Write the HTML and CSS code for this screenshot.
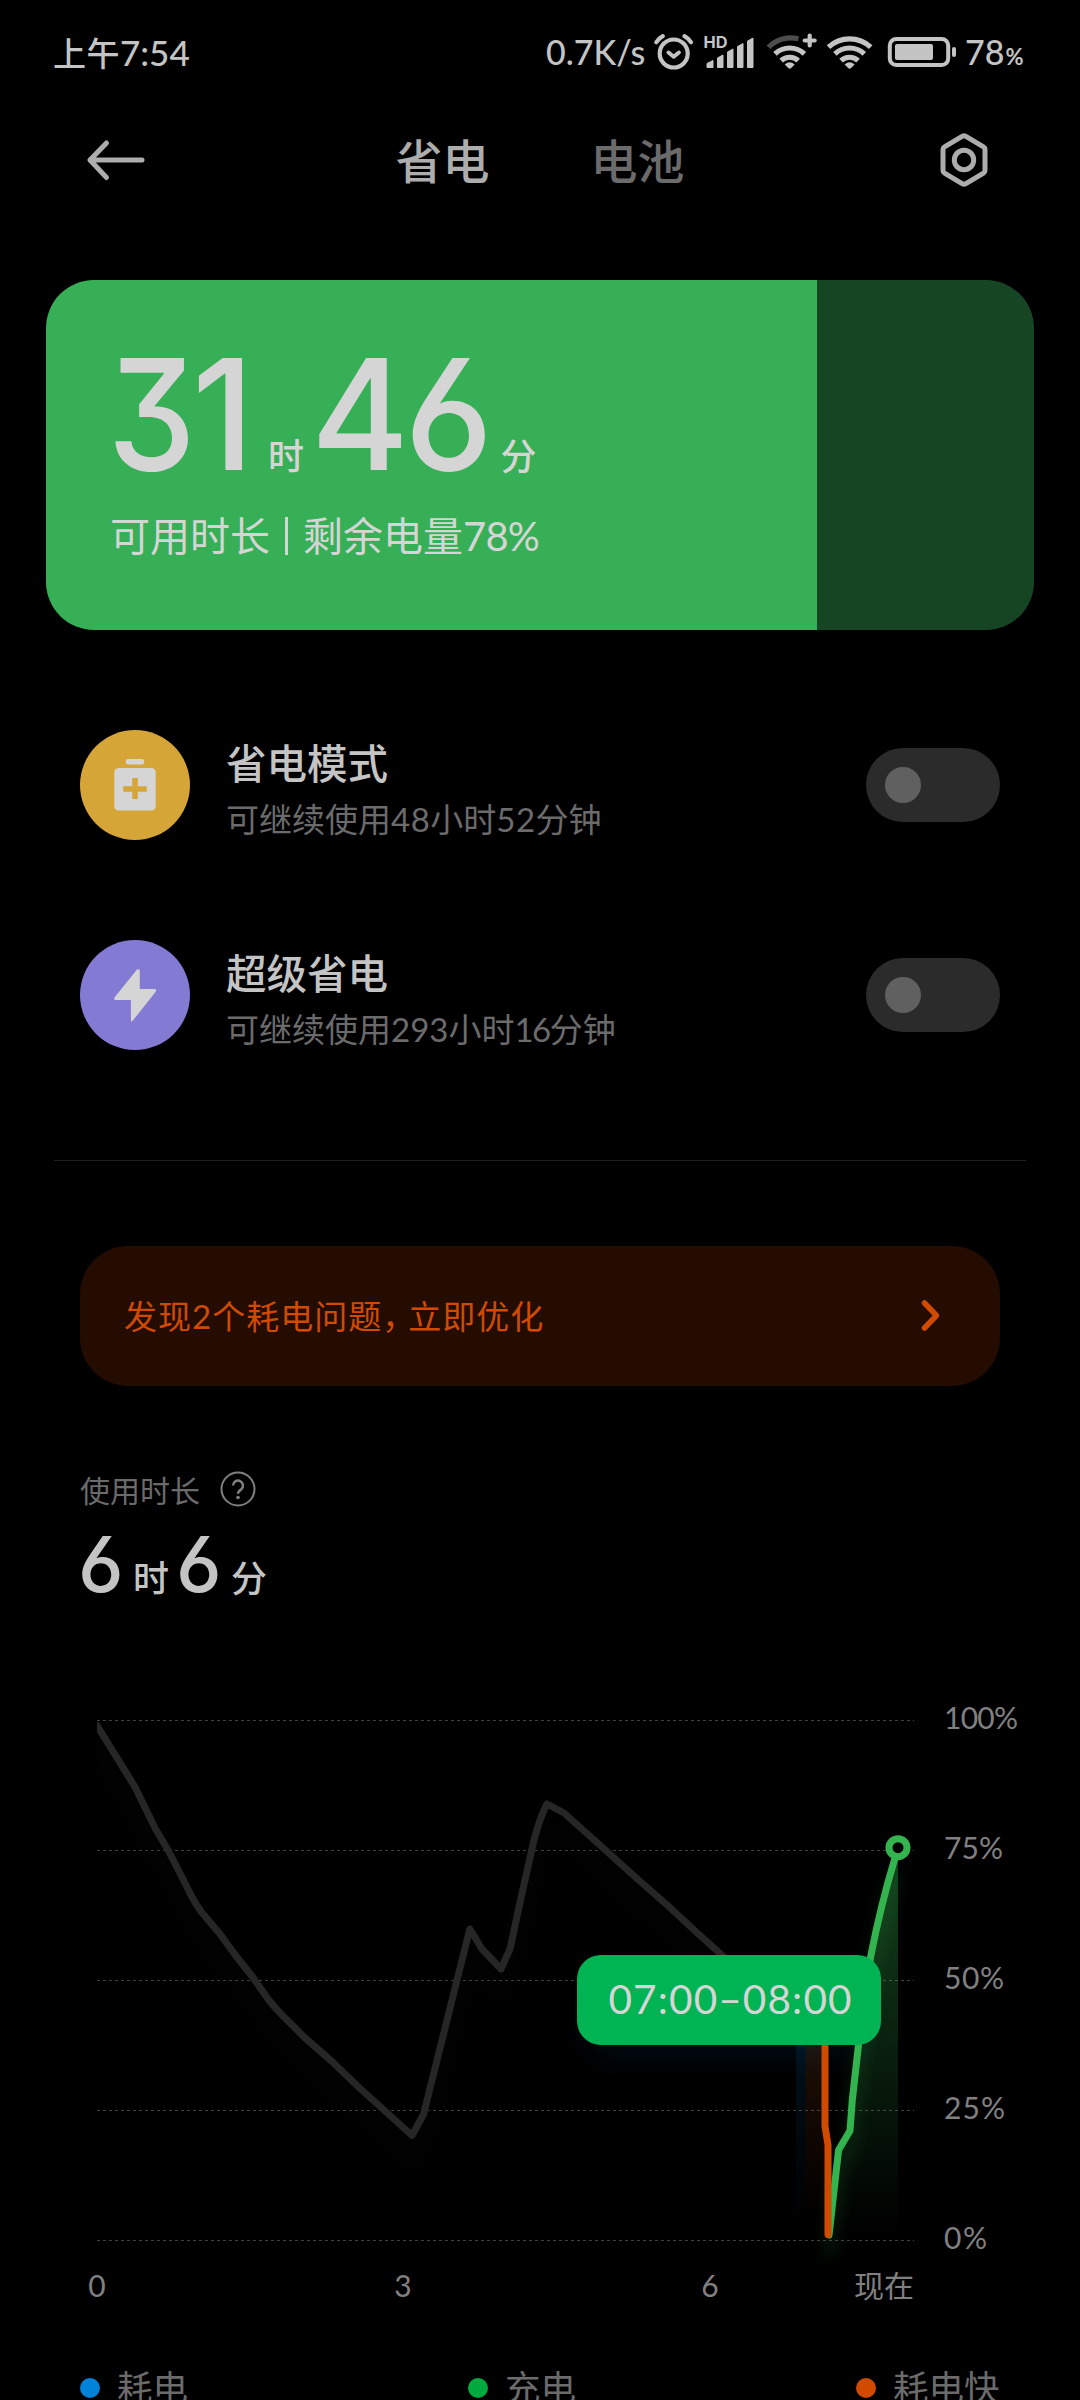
FILE: index.html
```html
<!DOCTYPE html>
<html lang="zh-CN">
<head>
<meta charset="utf-8">
<title>省电</title>
<link rel="stylesheet" href="styles.css">
</head>
<body>
<div class="screen">
  <div class="status">
    <span class="clock">上午<span>7:54</span></span>
    <div class="indicators">
      <span class="speed">0.7K/s</span>
      <svg class="status-icons" width="310" height="40" viewBox="650 32 310 40" fill="none">
        <g stroke="#c4c4c4" stroke-linecap="round" stroke-linejoin="round">
          <circle cx="673.7" cy="53.500" r="14" stroke-width="4.200"/>
          <path d="M668.5 52.500l5.200 4.200 5.200-4.200" stroke-width="4"/>
          <path d="M656.300 42.300Q658.500 38.500 662.800 36.200M691 42.300Q688.800 38.500 684.500 36.200" stroke-width="4.200"/>
        </g>
        <text class="hd" x="703.500" y="48" textLength="24" lengthAdjust="spacingAndGlyphs">HD</text>
        <path fill="#c4c4c4" stroke="#c4c4c4" stroke-width="1" stroke-linejoin="round" d="M707 63.500l6-3v7h-6zM717.500 58l5.500-3v12.500h-5.500zM727.500 52l5.500-3v18.500h-5.500zM737.500 46.500l5.500-3v24h-5.500zM747.500 41l5.500-3v29.500h-5.500z"/>
        <g stroke="#c4c4c4" stroke-width="5.200">
          <path d="M775 53.800a21.500 21.500 0 0 1 29.400 0M781.200 60.600a12.500 12.500 0 0 1 17 0"/>
          <path stroke="#4d4d4d" d="M768.500 47.200a31 31 0 0 1 30-8.400"/>
          <path d="M809.700 35.500v10M804.700 40.500h10" stroke-linecap="round" stroke-width="4.200"/>
          <path d="M828.500 47.200a31 31 0 0 1 42.200 0M834.900 53.800a21.500 21.500 0 0 1 29.400 0M841.100 60.600a12.500 12.500 0 0 1 17 0"/>
        </g>
        <path fill="#c4c4c4" d="M784.700 64.500q5-4.500 10 0l-3.500 3.600q-1.500 1.500-3 0zM844.600 64.500q5-4.500 10 0l-3.500 3.600q-1.500 1.500-3 0z"/>
        <rect x="889.800" y="39" width="58.400" height="26" rx="6.500" stroke="#c4c4c4" stroke-width="4"/>
        <rect x="895" y="44" width="38" height="16" rx="2" fill="#c4c4c4"/>
        <rect x="952" y="47" width="4" height="10" rx="2" fill="#c4c4c4"/>
      </svg>
      <span class="pct">78<small>%</small></span>
    </div>
  </div>

  <header class="topbar">
    <svg class="back" width="60" height="44" viewBox="0 0 60 44"><path d="M56 22H4M20.500 5L4 22l16.500 17.500" fill="none" stroke="#adadad" stroke-width="5" stroke-linecap="round" stroke-linejoin="round"/></svg>
    <nav class="tabs"><span class="tab active">省电</span><span class="tab">电池</span></nav>
    <svg class="gear" width="54" height="58" viewBox="0 0 54 58" fill="none" stroke="#adadad" stroke-width="5" stroke-linejoin="round"><path d="M25.500 5.200q1.500-.8 3 0l18 10.600q1.500.9 1.500 2.600v21.200q0 1.700-1.500 2.600l-18 10.600q-1.500.8-3 0l-18-10.600Q6 41.300 6 39.600V18.400q0-1.700 1.500-2.600z"/><circle cx="27" cy="29" r="9.700"/></svg>
  </header>

  <section class="battery-card">
    <svg class="time" width="480" height="160" viewBox="0 0 480 160">
      <text class="digit" transform="translate(-2.500 120) scale(.91 1)">3</text>
      <text class="digit" transform="translate(82 120) scale(.97 1)">1</text>
      <text class="unit" x="158" y="119.500">时</text>
      <text class="digit" transform="translate(201 120) scale(.97 1)">4</text>
      <text class="digit" transform="translate(294.500 120) scale(.97 1)">6</text>
      <text class="unit" x="390.500" y="119.500">分</text>
    </svg>
    <div class="remain">可用时长<span class="bar"></span>剩余电量<span class="num">78%</span></div>
  </section>

  <section class="modes">
    <div class="mode">
      <svg class="mode-icon" width="110" height="110" viewBox="0 0 110 110"><circle cx="55" cy="55" r="55" fill="#d5a538"/><g fill="#d5d5d5"><rect x="45.800" y="29" width="18.400" height="5.500" rx="2"/><rect x="34.300" y="38" width="41.400" height="42.500" rx="4.500"/></g><path d="M55 48v21M43.200 59h23.600" stroke="#d5a538" stroke-width="5.500"/></svg>
      <div class="mode-text"><h2>省电模式</h2><p>可继续使用<span class="wide">48</span>小时<span class="wide">52</span>分钟</p></div>
      <div class="switch"><span></span></div>
    </div>
    <div class="mode">
      <svg class="mode-icon" width="110" height="110" viewBox="0 0 110 110"><circle cx="55" cy="55" r="55" fill="#837ad4"/><path d="M57.500 30.200L35.200 58v1h16.600v21.500L75 51.200V50H58.900V30.500z" fill="#d5d5d5" stroke="#d5d5d5" stroke-width="1.800" stroke-linejoin="round"/></svg>
      <div class="mode-text"><h2>超级省电</h2><p>可继续使用<span>293</span>小时<span class="tight">16</span>分钟</p></div>
      <div class="switch"><span></span></div>
    </div>
  </section>
  <hr class="divider">

  <section class="issue">
    <span>发现<span class="num">2</span>个耗电问题<span class="comma">，</span>立即优化</span>
    <svg width="24" height="34" viewBox="0 0 24 34"><path d="M5.500 5l12 12.500-12 12.500" fill="none" stroke="#d04a00" stroke-width="5.500" stroke-linecap="round" stroke-linejoin="round"/></svg>
  </section>

  <section class="usage">
    <div class="usage-label"><span>使用时长</span><svg width="36" height="36" viewBox="0 0 36 36"><circle cx="18" cy="18" r="16.500" fill="none" stroke="#808080" stroke-width="2"/><path d="M13 14.500a5 5 0 1 1 8.200 3.900Q18 20.600 18 22.800" fill="none" stroke="#808080" stroke-width="2.500"/><circle cx="18" cy="26.500" r="1.800" fill="#808080"/></svg></div>
    <div class="usage-time"><b>6</b><i>时</i><b>6</b><i>分</i></div>
  </section>

  <svg class="chart" width="1080" height="640" viewBox="0 1680 1080 640">
    <defs>
      <linearGradient id="green" x1="0" y1="1848" x2="0" y2="2235" gradientUnits="userSpaceOnUse"><stop offset="0" stop-color="#34b44f" stop-opacity=".36"/><stop offset="1" stop-color="#34b44f" stop-opacity="0"/></linearGradient>
      <linearGradient id="blue" x1="0" y1="1980" x2="0" y2="2220" gradientUnits="userSpaceOnUse"><stop offset="0" stop-color="#0082d8" stop-opacity=".17"/><stop offset="1" stop-color="#0082d8" stop-opacity="0"/></linearGradient>
      <linearGradient id="orange" x1="0" y1="1980" x2="0" y2="2220" gradientUnits="userSpaceOnUse"><stop offset="0" stop-color="#b06030" stop-opacity=".22"/><stop offset="1" stop-color="#d04a00" stop-opacity="0"/></linearGradient>
      <filter id="glow" x="-20%" y="-20%" width="140%" height="140%"><feGaussianBlur stdDeviation="8"/></filter>
      <filter id="tipglow" x="-30%" y="-60%" width="160%" height="240%"><feGaussianBlur stdDeviation="16"/></filter>
      <clipPath id="plot"><path d="M97 1680H960V2320H97z"/></clipPath>
      <path id="history" d="M97 1725.500L109 1745 135 1787 155.500 1829 168 1850 188.500 1890Q193 1900 201 1911.500L220 1934 236 1956 253 1977.500 268 1999Q275 2008 282 2015L304.500 2037.500 332 2061.500 360 2088.500 384 2110 412 2135.500 423.500 2114.500 469.800 1929 482 1949 501 1969 510 1949 521.400 1896 530 1858Q537 1823 547 1804L564 1813 602 1847 633 1875 650 1890 669 1906.700 698.400 1934 724 1957"/>
      <path id="charging" d="M895 1858Q881 1904 870.600 1957L858.500 2045 852.300 2100 850 2130.700 838.600 2150 836 2173 829 2235"/>
    </defs>
    <path class="grid" d="M97 1720.500H914M97 1850.500H914M97 1980.500H914M97 2110.500H914M97 2240.500H914"/>
    <g clip-path="url(#plot)">
      <use href="#history" class="line" stroke="#262626" opacity=".17" filter="url(#glow)" y="24"/>
      <use href="#history" class="line" stroke="#262626"/>
    </g>
    <path d="M898 1848V2235H829L836 2173 838.600 2150 850 2130.700 852.300 2100 858.500 2045 870.600 1957Q881 1904 895 1858z" fill="url(#green)"/>
    <path d="M796 1980h9.500v240H796z" fill="url(#blue)"/>
    <path d="M805.500 1980H825v240h-19.500z" fill="url(#orange)"/>
    <rect x="590" y="1990" width="270" height="65" rx="24" fill="#0082d8" opacity=".1" filter="url(#tipglow)"/>
    <use href="#charging" class="line" stroke="#34b44f" opacity=".25" filter="url(#glow)" y="18"/>
    <use href="#charging" class="line" stroke="#34b44f"/>
    <path class="line" stroke="#d04a00" d="M825 2000V2126L828 2145V2234.500"/>
    <circle cx="898" cy="1847.700" r="9" stroke="#34b44f" stroke-width="7" fill="#000"/>
    <rect x="577" y="1955" width="304" height="90" rx="24" fill="#00b353"/>
    <text class="tip" x="608.500" y="2014" textLength="243">07:00–08:00</text>
    <g class="axis">
      <text x="944" y="1729" textLength="74">100%</text>
      <text x="944" y="1859" textLength="59">75%</text>
      <text x="944" y="1989" textLength="60">50%</text>
      <text x="944" y="2119" textLength="61">25%</text>
      <text x="944" y="2249" textLength="43">0%</text>
      <text x="97" y="2297" text-anchor="middle">0</text>
      <text x="403" y="2297" text-anchor="middle">3</text>
      <text x="710" y="2297" text-anchor="middle">6</text>
      <text x="914" y="2297" text-anchor="end">现在</text>
    </g>
  </svg>

  <footer class="legend">
    <span><i class="dot blue"></i>耗电</span>
    <span><i class="dot green"></i>充电</span>
    <span><i class="dot orange"></i>耗电快</span>
  </footer>
</div>
</body>
</html>
```
FILE: styles.css
```css
* { box-sizing: border-box; }
body { margin: 0; background: #000; }
b, i { font-style: normal; font-weight: 500; }
h2, p { margin: 0; }
svg { display: block; flex: none; overflow: visible; }

.screen {
  width: 1080px;
  height: 2400px;
  overflow: hidden;
  background: #000;
  color: #c4c4c4;
  font-family: Lato, "Noto Sans CJK SC", sans-serif;
  white-space: nowrap;
}

.status {
  height: 104px;
  padding: 32px 58px 0 53px;
  display: flex;
  justify-content: space-between;
  font-size: 34px;
  line-height: 40px;
  font-weight: 500;
}
.clock { font-size: 33px; letter-spacing: .5px; }
.clock span { font-size: 35px; letter-spacing: 0; }
.indicators { display: flex; width: 479px; margin-left: auto; }
.speed { flex: none; width: 107px; padding-left: 3px; }
.pct { padding-left: 5px; }
.pct small { font-size: 22px; font-weight: 700; margin-left: 1px; }
.hd { font: 700 16px Inter, sans-serif; fill: #c4c4c4; }

.topbar {
  height: 112px;
  padding: 0 89px 0 86px;
  display: flex;
  align-items: center;
  justify-content: space-between;
}
.back { margin-right: -3px; }
.tabs { display: flex; gap: 101px; padding-top: 2px; font-size: 47px; line-height: 60px; font-weight: 500; color: #6b6b6b; }
.tab.active { color: #adadad; }

.battery-card {
  margin: 64px 46px 0;
  height: 350px;
  padding: 70px 0 0 64px;
  border-radius: 48px;
  background: linear-gradient(90deg, #37af57 78%, #164524 78%);
  color: #d5d5d5;
}
.digit { font-family: Inter, sans-serif; font-size: 154px; font-weight: 450; font-feature-settings: "cv03", "cv09"; fill: #d5d5d5; }
.unit { font-size: 36px; font-weight: 500; fill: #d5d5d5; }
.remain { display: flex; align-items: center; height: 52px; font-size: 40px; line-height: 52px; }
.remain .bar { width: 3px; height: 38px; margin: 0 15px; background: #d5d5d5; }
.remain .num { letter-spacing: -.8px; }

.modes { height: 530px; padding: 50px 80px 0; }
.mode { height: 210px; display: flex; align-items: center; }
.mode-text { flex: 1; padding: 11px 0 0 36px; }
.mode h2 { font-size: 40.500px; line-height: 56px; font-weight: 500; color: #c4c4c4; }
.mode p { font-size: 33px; line-height: 54px; color: #6b6b6b; }
.wide { letter-spacing: .5px; }
.tight { letter-spacing: -1.500px; }
.switch { width: 134px; height: 74px; border-radius: 37px; padding: 19px; background: #2b2b2b; }
.switch span { display: block; width: 36px; height: 36px; border-radius: 50%; background: #606060; }
.divider { height: 1px; margin: 0 54px; border: 0; background: #1f1f1f; }

.issue {
  margin: 85px 80px 0;
  height: 140px;
  border-radius: 48px;
  padding: 0 57px 2px 44px;
  background: #250c00;
  color: #d04a00;
  font-size: 33px;
  letter-spacing: 1px;
  display: flex;
  align-items: center;
  justify-content: space-between;
}
.comma { letter-spacing: -7px; }

.usage { height: 294px; padding: 80px 80px 0; }
.usage-label { display: flex; align-items: center; height: 46px; gap: 20px; font-size: 30px; color: #6b6b6b; }
.usage-time { display: flex; align-items: baseline; height: 90px; line-height: 104px; }
.usage-time b { font-family: Inter, sans-serif; font-weight: 450; font-size: 77px; font-feature-settings: "cv03"; width: 47px; margin-left: -2px; }
.usage-time i { font-size: 36px; margin: 0 9px 0 8px; }

.line { fill: none; stroke-width: 7; stroke-linecap: round; stroke-linejoin: round; }
.grid { stroke: #404040; stroke-width: 1; stroke-dasharray: 3 3; }
.tip { font-size: 40.500px; fill: #d5d5d5; }
.axis { font-size: 30px; fill: #808080; }

.legend {
  display: grid;
  grid-template-columns: repeat(3, 388px);
  padding: 40px 0 0 80px;
  font-size: 35.500px;
  line-height: 56px;
  color: #6b6b6b;
}
.legend span { display: flex; align-items: center; }
.dot { width: 20px; height: 20px; margin-right: 17px; border-radius: 50%; }
.blue { background: #0082d8; }
.green { background: #00aa3c; }
.orange { background: #d04a00; }
```
